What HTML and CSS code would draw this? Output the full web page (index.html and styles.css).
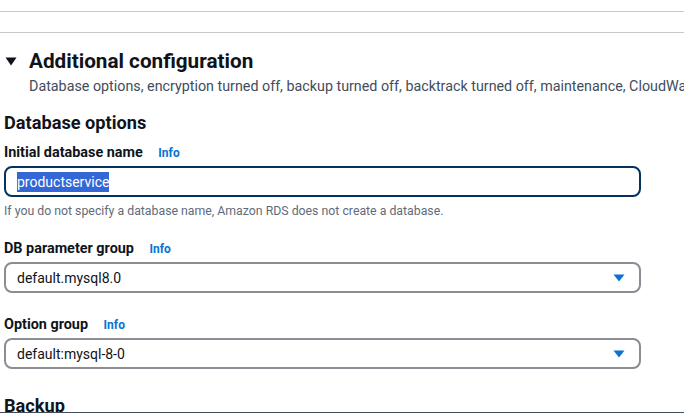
FILE: index.html
```html
<!DOCTYPE html>
<html>
<head>
<meta charset="utf-8">
<link rel="stylesheet" href="styles.css">
</head>
<body>
<div class="rules"></div>
<div class="expander">
  <div class="exp-head">
    <svg class="exp-icon" width="12" height="9" viewBox="0 0 12 9"><polygon points="0.5,0.5 11.5,0.5 6,8.5" fill="#0f141a"/></svg>
    <h2 class="exp-title">Additional configuration</h2>
  </div>
  <div class="exp-desc">Database options, encryption turned off, backup turned off, backtrack turned off, maintenance, CloudWatch Logs, delete protection turned off</div>
</div>
<div class="content">
  <h3 class="section-title">Database options</h3>

  <div class="field">
    <div class="label">Initial database name <span class="info">Info</span></div>
    <div class="input focused"><span class="sel">productservice</span></div>
    <div class="hint">If you do not specify a database name, Amazon RDS does not create a database.</div>
  </div>

  <div class="field">
    <div class="label">DB parameter group <span class="info">Info</span></div>
    <div class="input select"><span>default.mysql8.0</span>
      <svg class="caret" width="12" height="8" viewBox="0 0 12 8"><polygon points="0.5,0.5 11.5,0.5 6,7.5" fill="#0972d3"/></svg>
    </div>
  </div>

  <div class="field field-last">
    <div class="label">Option group <span class="info">Info</span></div>
    <div class="input select"><span>default:mysql-8-0</span>
      <svg class="caret" width="12" height="8" viewBox="0 0 12 8"><polygon points="0.5,0.5 11.5,0.5 6,7.5" fill="#0972d3"/></svg>
    </div>
  </div>

  <h3 class="section-title backup">Backup</h3>
</div>
<div class="bottom-line"></div>
</body>
</html>
```
FILE: styles.css
```css
html, body {
  margin: 0;
  padding: 0;
  background: #ffffff;
  width: 684px;
  height: 413px;
  overflow: hidden;
  font-family: Roboto, "Open Sans", Arial, sans-serif;
  color: #0f141a;
  position: relative;
}
.rules {
  margin-top: 11px;
  height: 20px;
  border-top: 1px solid #c6c6cd;
  border-bottom: 1px solid #c6c6cd;
}
.expander {
  padding: 16px 0 0 5px;
  overflow: hidden;
}
.exp-head {
  display: flex;
  align-items: center;
  gap: 12px;
  height: 24px;
}
.exp-icon {
  display: block;
  margin-top: 1px;
}
.exp-title {
  margin: 0;
  font-size: 20.7px;
  line-height: 24px;
  font-weight: 700;
  white-space: nowrap;
}
.exp-desc {
  padding-left: 24px;
  font-size: 14.3px;
  line-height: 20px;
  color: #414d5c;
  white-space: nowrap;
  margin-top: 3px;
}
.content {
  padding: 0 43px 0 4px;
}
.section-title {
  margin: 16px 0 0 0;
  font-size: 18.2px;
  line-height: 22px;
  font-weight: 700;
}
.field {
  margin-top: 10px;
}
.field + .field {
  margin-top: 21px;
}
.field + .field-last {
  margin-top: 23px;
}
.label {
  font-size: 14.4px;
  line-height: 18px;
  font-weight: 700;
}
.info {
  font-size: 12px;
  color: #0972d3;
  margin-left: 12px;
}
.input {
  margin-top: 4px;
  box-sizing: border-box;
  height: 31px;
  border: 2px solid #8c8c94;
  border-radius: 8px;
  padding: 0 14px 0 11px;
  display: flex;
  align-items: center;
  font-size: 14px;
  color: #0f141a;
}
.input.focused {
  border-color: #033160;
}
.sel {
  background: #3367d6;
  color: #ffffff;
  line-height: 20px;
}
.select {
  justify-content: space-between;
}
.caret {
  display: block;
}
.hint {
  margin-top: 6px;
  font-size: 12.3px;
  line-height: 16px;
  color: #5f6b7a;
}
.backup {
  margin-top: 26px;
}
.bottom-line {
  position: absolute;
  left: 0;
  right: 0;
  top: 412px;
  height: 1px;
  background: #414d5c;
}
```
